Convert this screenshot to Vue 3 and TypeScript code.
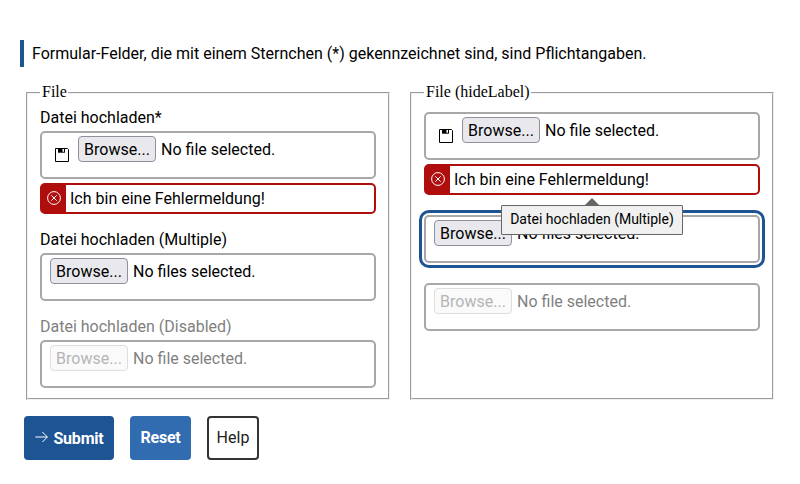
<script setup lang="ts">
interface Field {
  id: string
  label: string
  text: string
  required?: boolean
  icon?: boolean
  error?: string
  disabled?: boolean
  focused?: boolean
  tooltip?: string
}
interface Group {
  legend: string
  hideLabel: boolean
  fields: Field[]
}

const error = 'Ich bin eine Fehlermeldung!'
const groups: Group[] = [
  {
    legend: 'File',
    hideLabel: false,
    fields: [
      { id: 'a1', label: 'Datei hochladen', text: 'No file selected.', required: true, icon: true, error },
      { id: 'a2', label: 'Datei hochladen (Multiple)', text: 'No files selected.' },
      { id: 'a3', label: 'Datei hochladen (Disabled)', text: 'No file selected.', disabled: true },
    ],
  },
  {
    legend: 'File (hideLabel)',
    hideLabel: true,
    fields: [
      { id: 'b1', label: 'Datei hochladen', text: 'No file selected.', icon: true, error },
      {
        id: 'b2',
        label: 'Datei hochladen (Multiple)',
        text: 'No files selected.',
        focused: true,
        tooltip: 'Datei hochladen (Multiple)',
      },
      { id: 'b3', label: 'Datei hochladen (Disabled)', text: 'No file selected.', disabled: true },
    ],
  },
]
</script>

<template>
  <form class="form" @submit.prevent>
    <p class="hint">Formular-Felder, die mit einem Sternchen (*) gekennzeichnet sind, sind Pflichtangaben.</p>
    <div class="groups">
      <fieldset v-for="g in groups" :key="g.legend" class="group">
        <legend class="legend">{{ g.legend }}</legend>
        <div class="fields">
          <div v-for="f in g.fields" :key="f.id" class="field" :class="{ disabled: f.disabled }">
            <div v-if="!g.hideLabel" class="label">{{ f.label }}{{ f.required ? '*' : '' }}</div>
            <div class="box" :class="{ focused: f.focused }">
              <svg v-if="f.icon" class="disk" viewBox="0 0 14 14">
                <path d="M.5.5h12l1 1v12H.5z" fill="none" stroke="#000" />
                <path d="M3 .5h7v4.2H3z" fill="#000" />
                <path d="M7.5 1h1.5v2.7H7.5z" fill="#fff" />
              </svg>
              <button type="button" class="browse" :disabled="f.disabled">Browse...</button>
              <span class="status">{{ f.text }}</span>
              <div v-if="f.tooltip" class="tooltip">{{ f.tooltip }}</div>
            </div>
            <div v-if="f.error" class="error">
              <span class="error-mark">
                <svg viewBox="0 0 14 14" width="14" height="14" fill="none" stroke="#fff">
                  <circle cx="7" cy="7" r="6.4" />
                  <path d="M4.3 4.3l5.4 5.4M9.7 4.3L4.3 9.7" />
                </svg>
              </span>
              <span>{{ f.error }}</span>
            </div>
          </div>
        </div>
      </fieldset>
    </div>
    <div class="actions">
      <button type="submit" class="btn primary">
        <svg viewBox="0 0 13 12" width="13" height="12" fill="none" stroke="#fff">
          <path d="M.3 6h12M7.4 1l5 5-5 5" />
        </svg>
        <span class="submit-text">Submit</span>
      </button>
      <button type="reset" class="btn secondary">Reset</button>
      <button type="button" class="btn outline">Help</button>
    </div>
  </form>
</template>

<style>
body {
  background: #fff;
}
</style>

<style scoped>
.form {
  box-sizing: border-box;
  width: 800px;
  height: 484px;
  padding: 40px 26px 0 20px;
  font-family: Roboto, 'Liberation Sans', sans-serif;
  font-size: 16px;
  line-height: 19px;
  color: #000;
}
.hint {
  box-sizing: border-box;
  height: 27px;
  margin: 0;
  padding: 4px 0 4px 8px;
  border-left: 4px solid #1d5493;
  white-space: nowrap;
}
.groups {
  display: grid;
  grid-template-columns: 364px 364px;
  gap: 20px;
  margin: 17px 0 0 6px;
}
.group {
  box-sizing: border-box;
  min-width: 0;
  height: 316px;
  margin: 0;
  padding: 6px 12px 0;
  border: 2px groove #f0f0f0;
}
.legend {
  box-sizing: border-box;
  height: 18px;
  padding: 0 1px 0 2px;
  font: 16px/16px 'Liberation Serif', serif;
}
.fields {
  display: flex;
  flex-direction: column;
  gap: 16px;
}
.field {
  display: flex;
  flex-direction: column;
  gap: 4px;
}
.field:not(:has(.label)) {
  padding-top: 4px;
}
.label {
  height: 19px;
}
.disabled {
  color: #7f7f7f;
}
.box {
  position: relative;
  box-sizing: border-box;
  display: flex;
  align-items: flex-start;
  height: 48px;
  padding: 3px 8px;
  border: 2px solid #a8a8a8;
  border-radius: 5px;
}
.focused {
  outline: 3px solid #1d5493;
  outline-offset: 2px;
}
.disk {
  width: 14px;
  height: 14px;
  margin: 12px 9px 0 5px;
}
.browse {
  box-sizing: border-box;
  width: 78px;
  height: 26px;
  margin: 0 5px 0 0;
  padding: 2px 0 0;
  border: 1px solid #8f8f9d;
  border-radius: 4px;
  background: #e9e9ed;
  color: #000;
  font: inherit;
  line-height: 22px;
}
.browse:disabled {
  border-color: #dedee2;
  background: #fafafa;
  color: #b5b5b5;
}
.status {
  line-height: 28px;
}
.tooltip {
  position: absolute;
  left: 75px;
  top: -12px;
  box-sizing: border-box;
  width: 182px;
  height: 30px;
  border: 1px solid #666;
  border-radius: 1px;
  background: #f0f0f0;
  font-size: 14px;
  line-height: 26px;
  text-align: center;
  white-space: nowrap;
}
.tooltip::before {
  content: '';
  position: absolute;
  left: 82px;
  top: -8px;
  border: solid transparent;
  border-width: 0 8px 8px;
  border-bottom-color: #666;
}
.error {
  box-sizing: border-box;
  display: flex;
  gap: 4px;
  height: 31px;
  border: 2px solid #b00d0d;
  border-radius: 5px;
  line-height: 27px;
}
.error-mark {
  display: flex;
  align-items: center;
  box-sizing: border-box;
  width: 24px;
  padding: 0 0 1px 5px;
  background: #b00d0d;
}
.actions {
  display: flex;
  gap: 16px;
  margin: 16px 0 0 4px;
}
.btn {
  box-sizing: border-box;
  display: flex;
  align-items: center;
  justify-content: center;
  height: 44px;
  padding: 0 0 2px;
  border: 0;
  border-radius: 4px;
  font: inherit;
  font-weight: 700;
  letter-spacing: -0.2px;
  color: #fff;
}
.primary {
  width: 90px;
  gap: 5px;
  padding: 0 0 0 1px;
  background: #1d5493;
}
.primary svg {
  margin-top: -3px;
}
.submit-text {
  padding-top: 1px;
}
.secondary {
  width: 61px;
  background: #316bb0;
}
.outline {
  width: 52px;
  border: 2px solid #333;
  background: #fff;
  color: #222;
  font-weight: 400;
  letter-spacing: 0;
}
</style>
